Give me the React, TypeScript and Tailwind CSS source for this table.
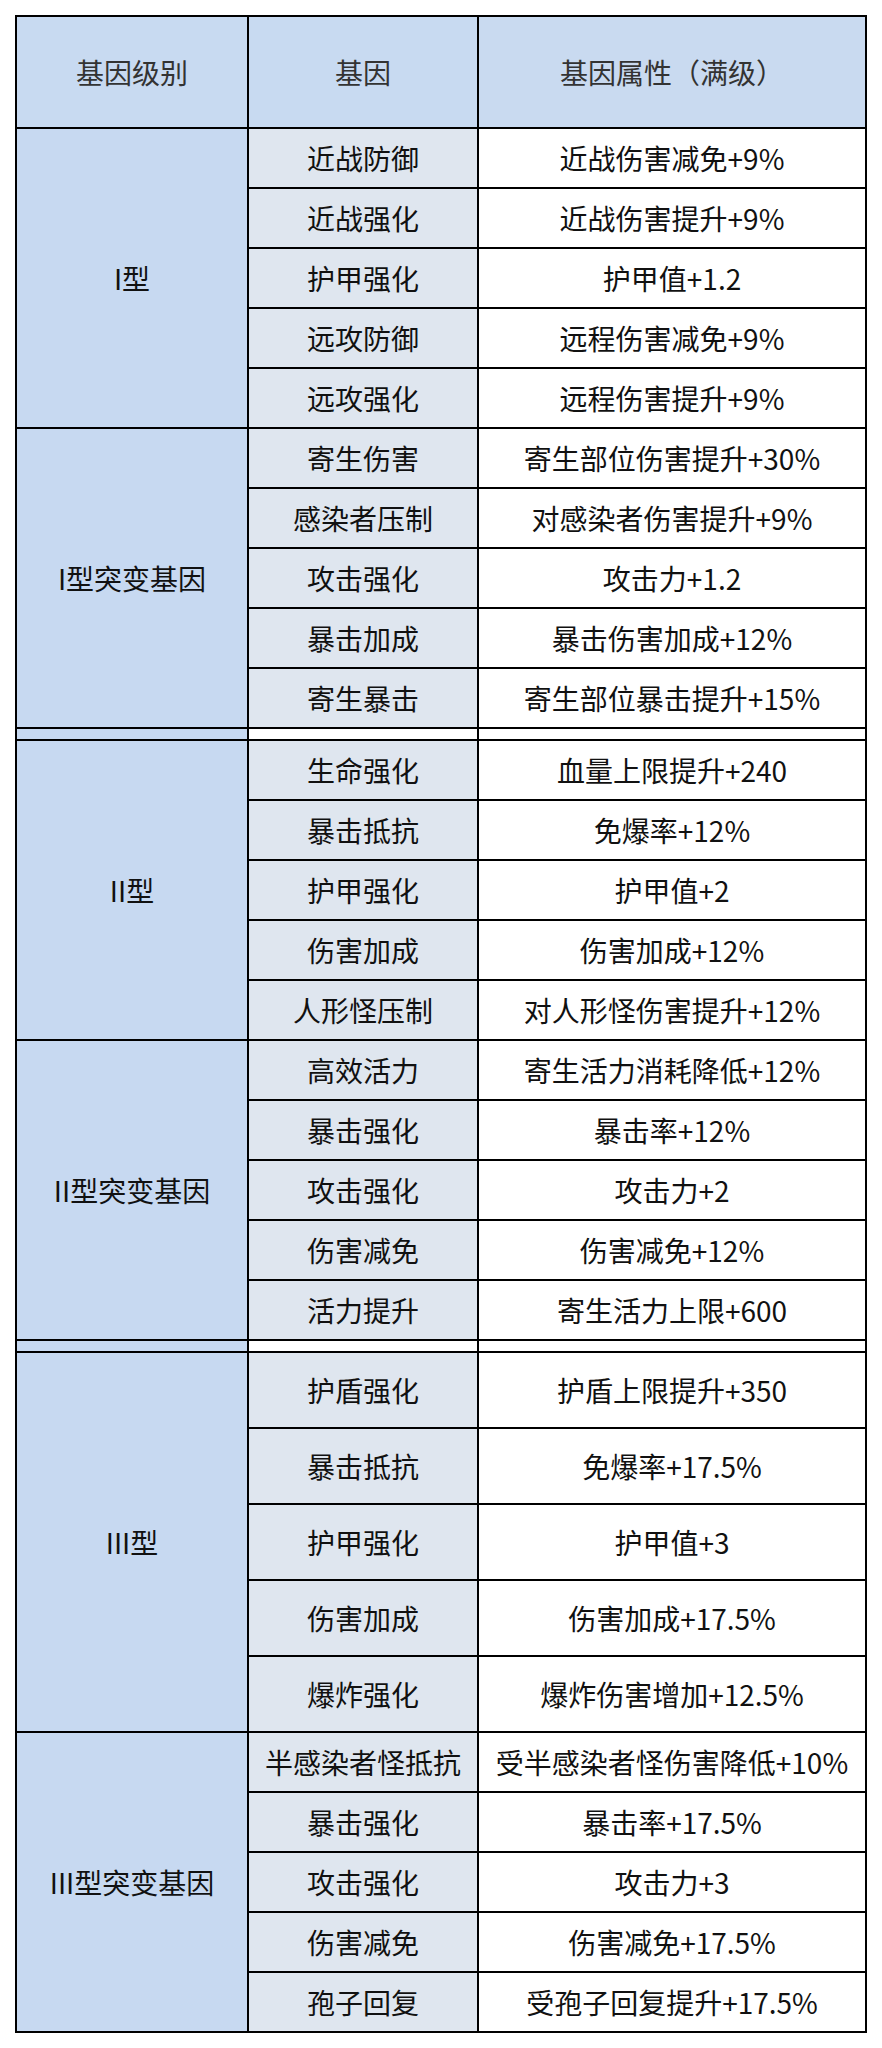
import React from 'react';

type Gene = [string, string];

const groups: { level: string; rowH: string; genes: Gene[]; gapAfter?: boolean }[] = [
  {
    level: 'I型',
    rowH: 'h-[58px]',
    genes: [
      ['近战防御', '近战伤害减免+9%'],
      ['近战强化', '近战伤害提升+9%'],
      ['护甲强化', '护甲值+1.2'],
      ['远攻防御', '远程伤害减免+9%'],
      ['远攻强化', '远程伤害提升+9%'],
    ],
  },
  {
    level: 'I型突变基因',
    rowH: 'h-[58px]',
    gapAfter: true,
    genes: [
      ['寄生伤害', '寄生部位伤害提升+30%'],
      ['感染者压制', '对感染者伤害提升+9%'],
      ['攻击强化', '攻击力+1.2'],
      ['暴击加成', '暴击伤害加成+12%'],
      ['寄生暴击', '寄生部位暴击提升+15%'],
    ],
  },
  {
    level: 'II型',
    rowH: 'h-[58px]',
    genes: [
      ['生命强化', '血量上限提升+240'],
      ['暴击抵抗', '免爆率+12%'],
      ['护甲强化', '护甲值+2'],
      ['伤害加成', '伤害加成+12%'],
      ['人形怪压制', '对人形怪伤害提升+12%'],
    ],
  },
  {
    level: 'II型突变基因',
    rowH: 'h-[58px]',
    gapAfter: true,
    genes: [
      ['高效活力', '寄生活力消耗降低+12%'],
      ['暴击强化', '暴击率+12%'],
      ['攻击强化', '攻击力+2'],
      ['伤害减免', '伤害减免+12%'],
      ['活力提升', '寄生活力上限+600'],
    ],
  },
  {
    level: 'III型',
    rowH: 'h-[74px]',
    genes: [
      ['护盾强化', '护盾上限提升+350'],
      ['暴击抵抗', '免爆率+17.5%'],
      ['护甲强化', '护甲值+3'],
      ['伤害加成', '伤害加成+17.5%'],
      ['爆炸强化', '爆炸伤害增加+12.5%'],
    ],
  },
  {
    level: 'III型突变基因',
    rowH: 'h-[58px]',
    genes: [
      ['半感染者怪抵抗', '受半感染者怪伤害降低+10%'],
      ['暴击强化', '暴击率+17.5%'],
      ['攻击强化', '攻击力+3'],
      ['伤害减免', '伤害减免+17.5%'],
      ['孢子回复', '受孢子回复提升+17.5%'],
    ],
  },
];

const cell = 'flex items-center justify-center whitespace-nowrap';

export default function App() {
  return (
    <div className="min-h-screen bg-white p-[15px] font-['Noto_Sans_CJK_SC','Noto_Sans',sans-serif] text-[28px] leading-none text-[#111]">
      <div className="grid w-[852px] grid-cols-[230px_228px_386px] gap-[2px] bg-black p-[2px]">
        {/* Header */}
        <div className={`${cell} h-[110px] bg-[#c8daf1] text-[#333]`}>基因级别</div>
        <div className={`${cell} h-[110px] bg-[#c8daf1] text-[#333]`}>基因</div>
        <div className={`${cell} h-[110px] bg-[#c9daf0] text-[#333]`}>基因属性（满级）</div>

        {groups.map((g) => (
          <React.Fragment key={g.level}>
            <div className={`${cell} row-span-5 bg-[#c7d9f1]`}>{g.level}</div>
            {g.genes.map(([name, attr], i) => (
              <React.Fragment key={i}>
                <div className={`${cell} ${g.rowH} bg-[#dfe6ef]`}>{name}</div>
                <div className={`${cell} ${g.rowH} bg-white`}>{attr}</div>
              </React.Fragment>
            ))}
            {g.gapAfter && (
              <>
                <div className="h-[10px] bg-[#c7d9f1]" />
                <div className="h-[10px] bg-white" />
                <div className="h-[10px] bg-white" />
              </>
            )}
          </React.Fragment>
        ))}
      </div>
    </div>
  );
}
